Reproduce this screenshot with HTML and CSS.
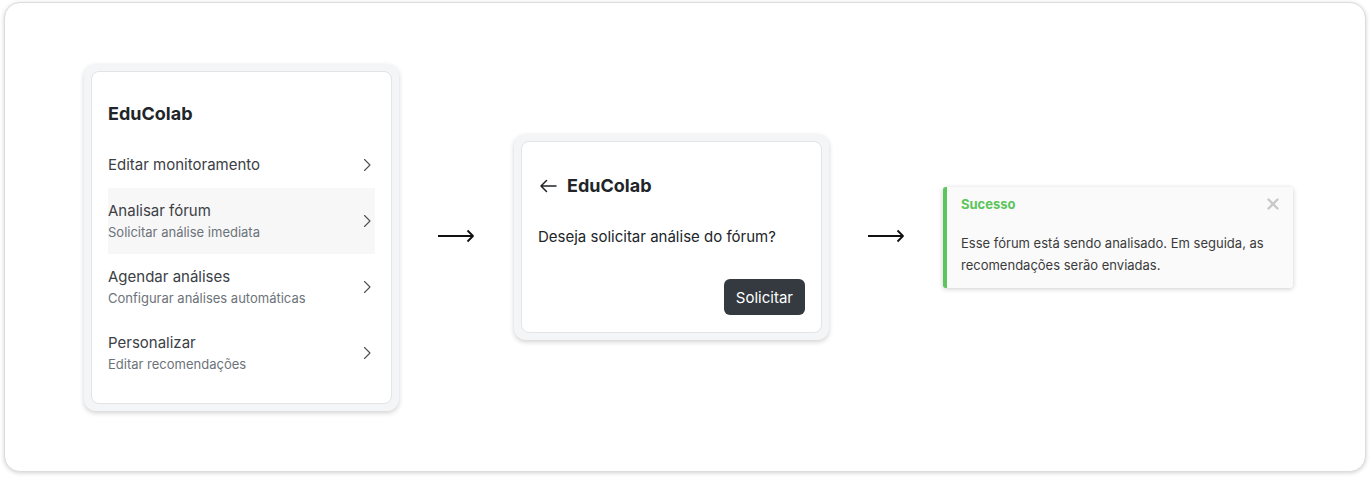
FILE: index.html
```html
<!DOCTYPE html>
<html lang="pt">
<head>
<meta charset="utf-8">
<title>EduColab</title>
<link rel="stylesheet" href="styles.css">
</head>
<body>
<div class="frame">
  <div class="shell">
    <div class="card menu">
      <h1 class="title">EduColab</h1>
      <ul class="list">
        <li class="item">
          <div class="item-text"><span class="item-title">Editar monitoramento</span></div>
          <svg class="chev" width="10" height="16" viewBox="0 0 10 16"><path d="M2.5 2.5l5.5 5.5-5.5 5.5" fill="none" stroke="#4a4f55" stroke-width="1.1" stroke-linecap="round" stroke-linejoin="round"/></svg>
        </li>
        <li class="item active">
          <div class="item-text"><span class="item-title">Analisar fórum</span><span class="item-sub">Solicitar análise imediata</span></div>
          <svg class="chev" width="10" height="16" viewBox="0 0 10 16"><path d="M2.5 2.5l5.5 5.5-5.5 5.5" fill="none" stroke="#4a4f55" stroke-width="1.1" stroke-linecap="round" stroke-linejoin="round"/></svg>
        </li>
        <li class="item">
          <div class="item-text"><span class="item-title">Agendar análises</span><span class="item-sub">Configurar análises automáticas</span></div>
          <svg class="chev" width="10" height="16" viewBox="0 0 10 16"><path d="M2.5 2.5l5.5 5.5-5.5 5.5" fill="none" stroke="#4a4f55" stroke-width="1.1" stroke-linecap="round" stroke-linejoin="round"/></svg>
        </li>
        <li class="item">
          <div class="item-text"><span class="item-title">Personalizar</span><span class="item-sub">Editar recomendações</span></div>
          <svg class="chev" width="10" height="16" viewBox="0 0 10 16"><path d="M2.5 2.5l5.5 5.5-5.5 5.5" fill="none" stroke="#4a4f55" stroke-width="1.1" stroke-linecap="round" stroke-linejoin="round"/></svg>
        </li>
      </ul>
    </div>
  </div>

  <div class="flow-arrow">
    <svg width="37" height="14" viewBox="0 0 37 14"><path d="M0 7h35M29.5 1.5l5.5 5.5-5.5 5.5" fill="none" stroke="#111" stroke-width="1.8" stroke-linejoin="round"/></svg>
  </div>

  <div class="shell">
    <div class="card dialog">
      <div class="dialog-head">
        <svg class="back" width="18" height="14" viewBox="0 0 18 14"><path d="M17 7H2M7.5 1.5L2 7l5.5 5.5" fill="none" stroke="#212529" stroke-width="1.5" stroke-linecap="round" stroke-linejoin="round"/></svg>
        <h2 class="title">EduColab</h2>
      </div>
      <p class="question">Deseja solicitar análise do fórum?</p>
      <div class="actions"><button class="btn">Solicitar</button></div>
    </div>
  </div>

  <div class="flow-arrow">
    <svg width="37" height="14" viewBox="0 0 37 14"><path d="M0 7h35M29.5 1.5l5.5 5.5-5.5 5.5" fill="none" stroke="#111" stroke-width="1.8" stroke-linejoin="round"/></svg>
  </div>

  <div class="toast">
    <div class="toast-head">
      <strong class="toast-title">Sucesso</strong>
      <svg class="close" width="12" height="12" viewBox="0 0 12 12"><path d="M1.5 1.5l9 9M10.5 1.5l-9 9" stroke="#c9c9c9" stroke-width="2.4" stroke-linecap="round"/></svg>
    </div>
    <div class="toast-body">Esse fórum está sendo analisado. Em seguida, as recomendações serão enviadas.</div>
  </div>
</div>
</body>
</html>
```

FILE: styles.css
```css
* { box-sizing: border-box; }

html, body {
  margin: 0;
  background: #ffffff;
}

body {
  padding: 2px 4px 8px 4px;
  font-family: Inter, "Noto Sans", "Liberation Sans", sans-serif;
  color: #3b4045;
}

.frame {
  height: 470px;
  border: 1px solid #dcdcdc;
  border-radius: 16px;
  box-shadow: 0 1px 4px rgba(0, 0, 0, 0.18);
  background: #fff;
  display: flex;
  align-items: center;
  padding-left: 79px;
  gap: 39px;
}

.shell {
  background: #f4f5f6;
  border-radius: 12px;
  padding: 7px;
  box-shadow: 0 2px 5px rgba(0, 0, 0, 0.18);
}

.card {
  width: 301px;
  background: #fff;
  border: 1px solid #e3e4e6;
  border-radius: 8px;
}

.title {
  margin: 0;
  font-size: 18px;
  line-height: 24px;
  font-weight: 700;
  color: #212529;
}

.menu {
  padding: 30px 16px 17px 16px;
}

.list {
  list-style: none;
  margin: 16px 0 0 0;
  padding: 0;
}

.item {
  display: flex;
  align-items: center;
  justify-content: space-between;
  padding: 12px 0;
}

.item.active {
  background: #f7f7f8;
}

.item-text {
  display: flex;
  flex-direction: column;
}

.item-title {
  font-size: 15px;
  line-height: 22px;
  color: #3b4045;
}

.item-sub {
  font-size: 13px;
  line-height: 20px;
  color: #6c737a;
}

.chev {
  margin-right: 3px;
}

.dialog {
  padding: 32px 16px 17px 16px;
}

.dialog-head {
  display: flex;
  align-items: center;
  gap: 10px;
}

.back {
  margin-left: 1px;
}

.question {
  margin: 28px 0 0 0;
  font-size: 15px;
  line-height: 22px;
  color: #212529;
}

.actions {
  display: flex;
  justify-content: flex-end;
  margin-top: 31px;
}

.btn {
  height: 36px;
  padding: 0 12px;
  border: none;
  border-radius: 6px;
  background: #343a40;
  color: #fff;
  font-family: inherit;
  font-size: 15px;
}

.toast {
  width: 350px;
  margin-left: -1px;
  background: #fafafa;
  border-left: 4px solid #5cc55c;
  border-radius: 3px;
  box-shadow: 0 1px 5px rgba(0, 0, 0, 0.2);
}

.toast-head {
  display: flex;
  align-items: center;
  justify-content: space-between;
  height: 34px;
  padding: 0 14px 0 14px;
}

.toast-title {
  font-size: 13px;
  font-weight: 700;
  color: #5cc55c;
}

.toast-body {
  padding: 11px 14px 12px 14px;
  font-size: 13px;
  line-height: 22px;
  color: #3a3a3a;
}
```
